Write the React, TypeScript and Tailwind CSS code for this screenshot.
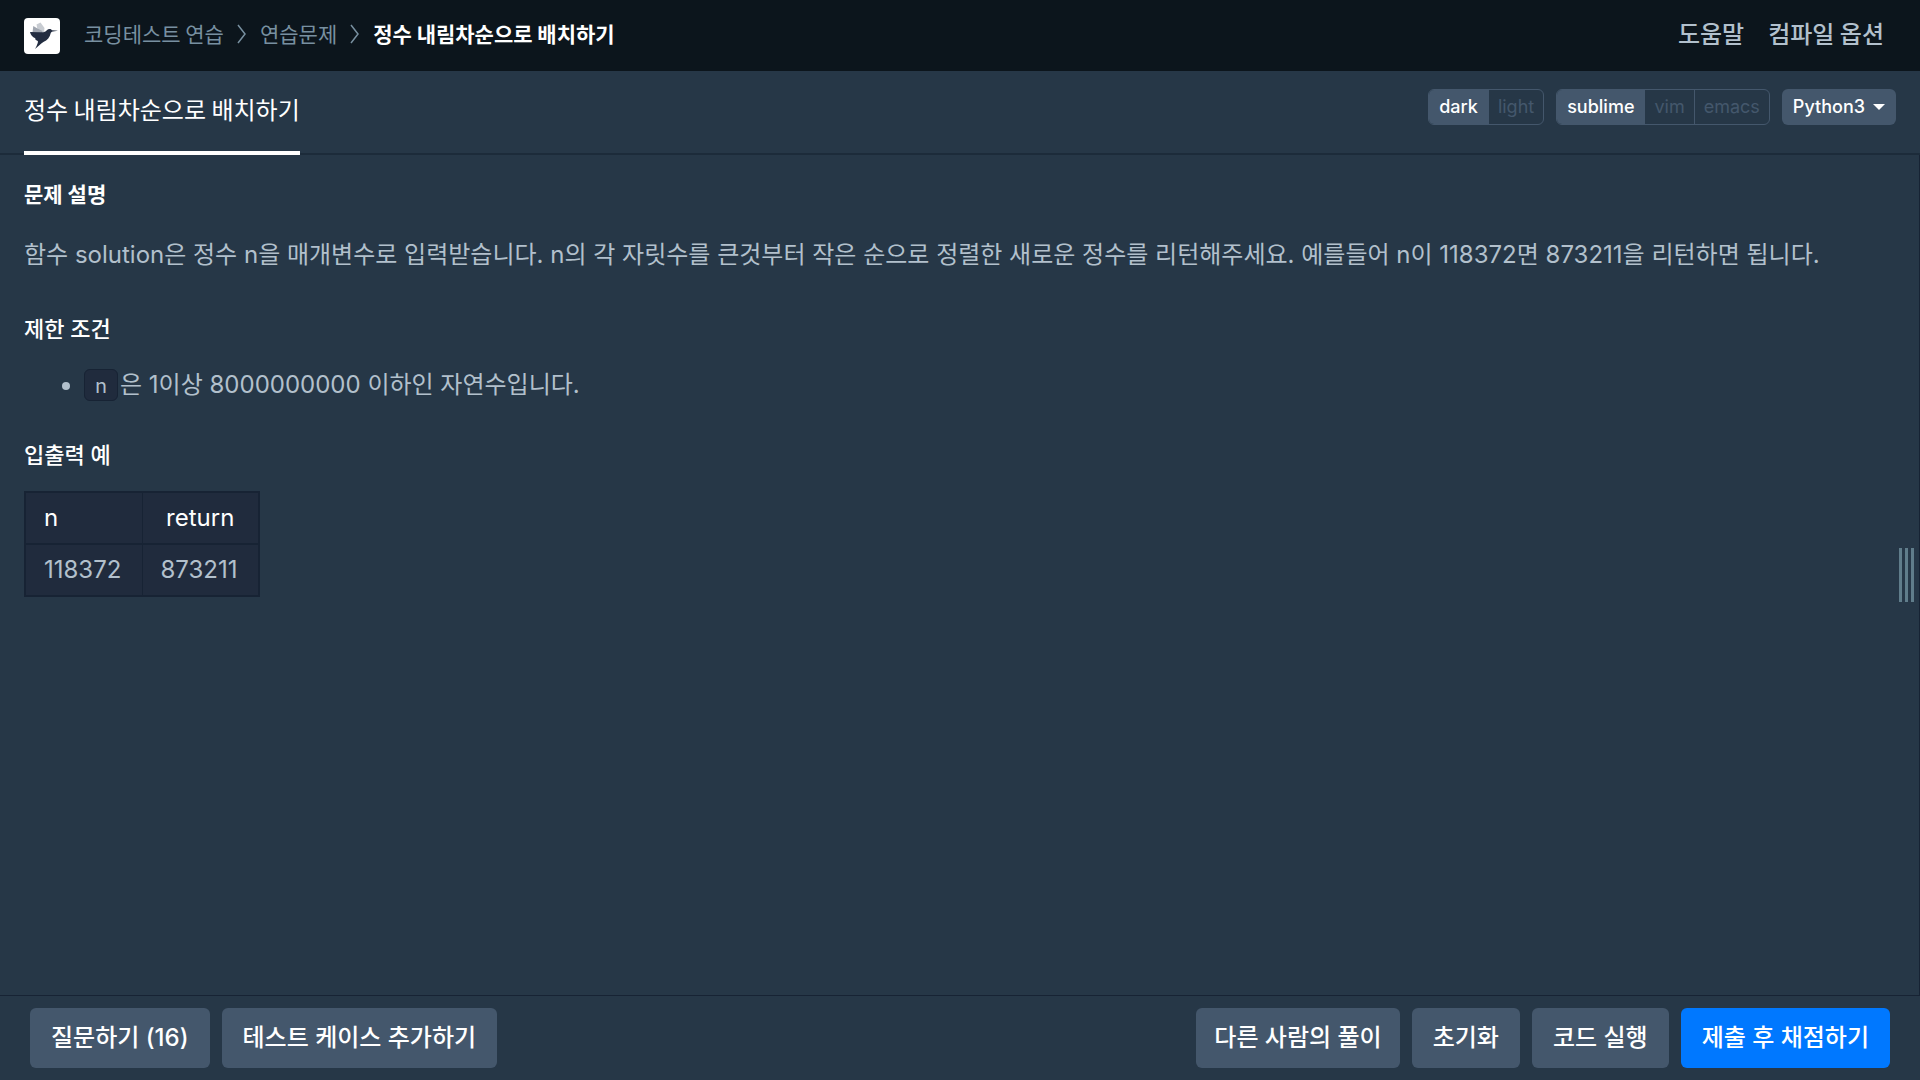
import { useState } from "react";

const crumbs = ["코딩테스트 연습", "연습문제"];
const keymaps = ["sublime", "vim", "emacs"];
const themes = ["dark", "light"];

function Logo() {
  return (
    <svg viewBox="0 0 36 36" className="block size-9" aria-hidden="true">
      <rect width="36" height="36" rx="4" fill="#fff" />
      <path d="M14 14.5 L12.5 6.5 L16.5 4.5 L20.5 10 L20 14.5 Z" fill="#c8ccd2" />
      <path d="M8.5 14.5 L9.3 8 L13.5 10.5 L18.5 13 L18 15 Z" fill="#a0a6b0" />
      <path
        d="M34 12.8 L28 12.2 C27 10.6 24.4 10.4 22.8 12.2 C21.4 13.8 20 14.3 17 14.2 L6 14 C6.6 17 8.4 19 11.4 20.2 C11 20.8 11.2 21.4 12 22 C13 22.6 14 23 14 23.8 C13.4 26.6 12.4 28.6 11 31 C14.4 28.6 16.4 25.6 19.4 24 C23.4 22.4 26 19 26.6 15.6 C26.8 14.4 27.6 13.8 28.8 13.6 Z"
        fill="#222c40"
      />
    </svg>
  );
}

function ToggleGroup({ options, value, onChange }) {
  return (
    <div className="flex h-9 divide-x divide-[#44576c] overflow-hidden rounded-md border border-[#44576c]">
      {options.map((option) => (
        <button
          key={option}
          onClick={() => onChange(option)}
          className={
            option === value
              ? "bg-[#44576c] px-2.5 font-medium text-white"
              : "px-[9px] text-[#44576c]"
          }
        >
          {option}
        </button>
      ))}
    </div>
  );
}

export default function App() {
  const [theme, setTheme] = useState("dark");
  const [keymap, setKeymap] = useState("sublime");

  return (
    <div className="flex min-h-screen flex-col bg-[#263747] font-['Inter','Noto_Sans_CJK_KR',sans-serif] text-2xl text-[#b2c0cc]">

      {/* HEADER */}
      <header className="flex h-[71px] items-center justify-between bg-[#0c151c] pl-6 pr-9 font-['Noto_Sans_CJK_KR',sans-serif]">
        <div className="flex items-center gap-6">
          <a href="#" aria-label="Home">
            <Logo />
          </a>
          <nav className="flex items-center pb-1.5 text-[21px] leading-8">
            {crumbs.map((crumb) => (
              <div key={crumb} className="flex items-center">
                <a href="#" className="text-[#7890a0]">{crumb}</a>
                <svg viewBox="0 0 12 24" className="mx-3 h-6 w-3" fill="none" stroke="#7890a0" strokeWidth="1.5">
                  <path d="M2 4 L9 13 L2 22" />
                </svg>
              </div>
            ))}
            <span className="font-bold text-white">정수 내림차순으로 배치하기</span>
          </nav>
        </div>
        <div className="flex gap-6 pb-1.5 font-medium leading-8">
          <a href="#">도움말</a>
          <a href="#">컴파일 옵션</a>
        </div>
      </header>

      {/* TAB + EDITOR SETTINGS */}
      <div className="flex h-[84px] items-stretch justify-between border-b-2 border-[#1c2b3a] px-6">
        <a href="#" className="-mb-0.5 border-b-4 border-white pt-[22px] font-['Noto_Sans_CJK_KR',sans-serif] leading-8 text-white">
          정수 내림차순으로 배치하기
        </a>
        <div className="flex gap-3 pt-[18px] text-lg leading-8">
          <ToggleGroup options={themes} value={theme} onChange={setTheme} />
          <ToggleGroup options={keymaps} value={keymap} onChange={setKeymap} />
          <button className="flex h-9 items-center gap-2 rounded-md bg-[#44576c] px-[11px] font-medium text-white">
            Python3
            <svg viewBox="0 0 12 6" className="h-1.5 w-3" fill="currentColor">
              <path d="M0 0 H12 L6 6 Z" />
            </svg>
          </button>
        </div>
      </div>

      {/* PROBLEM */}
      <main className="flex grow border-r border-[#172334]">
        <div className="grow px-6 pt-6">
          <h1 className="text-[21px] font-bold leading-8 text-white">문제 설명</h1>
          <p className="mt-6 leading-10">
            함수 solution은 정수 n을 매개변수로 입력받습니다. n의 각 자릿수를 큰것부터 작은 순으로 정렬한 새로운 정수를 리턴해주세요. 예를들어 n이 118372면 873211을 리턴하면 됩니다.
          </p>

          <h2 className="mt-[38px] text-[22px] font-medium leading-8 text-white">제한 조건</h2>
          <ul className="mt-[22px] list-disc pl-[60px] leading-9">
            <li>
              <code className="mr-0.5 rounded-md border border-[#172334] bg-[#202b3d] px-2.5 py-0.5 font-['Roboto_Mono','DejaVu_Sans_Mono',monospace] text-xl">
                n
              </code>
              은 1이상 8000000000 이하인 자연수입니다.
            </li>
          </ul>

          <h2 className="mt-9 text-[22px] font-medium leading-8 text-white">입출력 예</h2>
          <table className="mt-5 border-2 border-[#172334] bg-[#202b3d] leading-[34px]">
            <thead className="border-b-2 border-[#172334] text-white">
              <tr>
                <th className="min-w-[117px] border-r border-[#172334] px-[18px] py-2 text-left font-normal">n</th>
                <th className="min-w-[117px] px-[18px] py-2 text-center font-normal">return</th>
              </tr>
            </thead>
            <tbody>
              <tr>
                <td className="border-r border-[#172334] px-[18px] py-2">118372</td>
                <td className="px-[18px] py-2">873211</td>
              </tr>
            </tbody>
          </table>
        </div>

        {/* drag handle */}
        <div className="mr-[5px] flex items-center gap-[3px]">
          <span className="h-[54px] w-[3px] bg-[#607d8b]" />
          <span className="h-[54px] w-[3px] bg-[#607d8b]" />
          <span className="h-[54px] w-[3px] bg-[#607d8b]" />
        </div>
      </main>

      {/* ACTIONS */}
      <footer className="flex justify-between border-t border-[#172334] px-[30px] py-3 font-medium text-white">
        <div className="flex gap-3">
          <button className="h-[60px] rounded-md bg-[#44576c] px-[21px]">질문하기 (16)</button>
          <button className="h-[60px] rounded-md bg-[#44576c] px-[21px]">테스트 케이스 추가하기</button>
        </div>
        <div className="flex gap-3">
          <button className="h-[60px] rounded-md bg-[#44576c] px-[18px]">다른 사람의 풀이</button>
          <button className="h-[60px] rounded-md bg-[#44576c] px-[21px]">초기화</button>
          <button className="h-[60px] rounded-md bg-[#44576c] px-[21px]">코드 실행</button>
          <button className="h-[60px] rounded-md bg-[#0078ff] px-[21px]">제출 후 채점하기</button>
        </div>
      </footer>
    </div>
  );
}
